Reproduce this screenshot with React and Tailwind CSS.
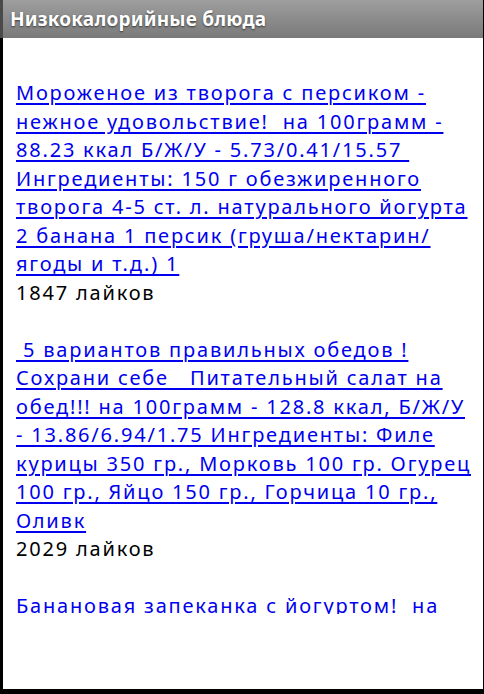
import React from "react";

const items = [
  {
    lines: [
      "Мороженое из творога с персиком -",
      "нежное удовольствие!\u00a0 на 100грамм -",
      "88.23 ккал Б/Ж/У - 5.73/0.41/15.57\u00a0",
      "Ингредиенты: 150 г обезжиренного",
      "творога 4-5 ст. л. натурального йогурта",
      "2 банана 1 персик (груша/нектарин/",
      "ягоды и т.д.) 1",
    ],
    likes: "1847 лайков",
  },
  {
    lines: [
      "\u00a05 вариантов правильных обедов !",
      "Сохрани себе \u00a0 Питательный салат на",
      "обед!!! на 100грамм - 128.8 ккал, Б/Ж/У",
      "- 13.86/6.94/1.75 Ингредиенты: Филе",
      "курицы 350 гр., Морковь 100 гр. Огурец",
      "100 гр., Яйцо 150 гр., Горчица 10 гр.,",
      "Оливк",
    ],
    likes: "2029 лайков",
  },
  {
    lines: ["Банановая запеканка с йогуртом!\u00a0 на", "100грамм - 120 ккал"],
    likes: "",
  },
];

export default function App() {
  return (
    <div
      className="w-[484px] h-[694px] bg-black flex flex-col overflow-hidden"
      style={{ fontFamily: "'Noto Sans', 'Open Sans', sans-serif" }}
    >
      <div className="h-[38px] flex shrink-0">
        <div className="w-[3px] bg-[#4a4a4a]" />
        <div className="flex-1 bg-gradient-to-b from-[#9e9e9e] to-[#7a7a7a] flex items-center pl-[7px]">
          <span
            className="text-white font-bold text-[19px] leading-none tracking-[0.2px]"
            style={{ textShadow: "0 1px 2px rgba(0,0,0,0.6)" }}
          >
            Низкокалорийные блюда
          </span>
        </div>
        <div className="w-[1.5px] bg-black" />
      </div>
      <div className="flex-1 ml-[3px] mr-[1.5px] mb-[5px] bg-white flex flex-col">
        <div className="h-[576px] overflow-hidden pl-[13px] pr-[4px] pt-[12.5px] text-[20px] leading-[28.5px] tracking-[1.8px] whitespace-nowrap">
          {items.map((it, i) => (
            <div key={i}>
              <div className="h-[28.5px]" />
              <a
                href="#"
                className="text-[#0000ee] underline decoration-[1.5px] underline-offset-[3px] whitespace-pre"
              >
                {it.lines.map((l, j) => (
                  <React.Fragment key={j}>
                    {l}
                    {j < it.lines.length - 1 && <br />}
                  </React.Fragment>
                ))}
              </a>
              {it.likes && <div className="text-black">{it.likes}</div>}
            </div>
          ))}
        </div>
      </div>
    </div>
  );
}
